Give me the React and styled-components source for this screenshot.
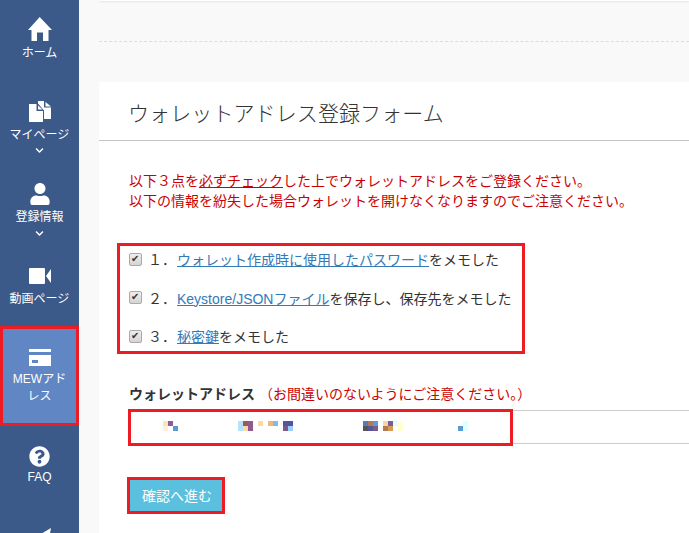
import styled, { createGlobalStyle } from "styled-components";
import { FaUser, FaQuestionCircle, FaChevronDown } from "react-icons/fa";

const GlobalStyle = createGlobalStyle`
  html, body {
    margin: 0;
    height: 533px;
    overflow: hidden;
    background: #f9f9f9;
    font-family: "Liberation Sans", "Noto Sans CJK JP", sans-serif;
    color: #333;
  }
`;

const Page = styled.div`
  display: flex;
  height: 533px;
  overflow: hidden;
`;

const Sidebar = styled.nav`
  flex: 0 0 79px;
  display: flex;
  flex-direction: column;
  background: #3b5a8a;
  color: #fff;
  overflow: hidden;
`;

const NavItem = styled.div`
  flex: 0 0 ${(p) => p.$height}px;
  box-sizing: border-box;
  padding-top: ${(p) => p.$top}px;
  display: flex;
  flex-direction: column;
  align-items: center;
  font-size: 12px;
  line-height: 18px;
  text-align: center;
  position: relative;
  ${(p) => p.$active && "background: #6087c4;"}
`;

const NavIcon = styled.div`
  height: ${(p) => p.$h || 24}px;
  margin-bottom: ${(p) => p.$gap ?? 2}px;
  display: flex;
  align-items: center;
  justify-content: center;
`;

const NavChevron = styled(FaChevronDown)`
  font-size: 9px;
  margin-top: ${(p) => p.$mt ?? 3}px;
`;

const WrappedLabel = styled.div`
  padding: 3px 8px 0;
  line-height: 17px;
`;

const RedFrame = styled.div`
  position: absolute;
  inset: ${(p) => p.$inset || "0"};
  ${(p) => p.$width && `width: ${p.$width}px;`}
  ${(p) => p.$height && `height: ${p.$height}px;`}
  border: 3px solid #ed1c24;
  pointer-events: none;
`;

const Main = styled.main`
  flex: 1;
  min-width: 0;
  padding-left: 20px;
`;

const TopBar = styled.div`
  height: 1px;
  background: #fff;
  box-shadow: 0 1px 2px rgba(0, 0, 0, 0.12);
`;

const DashedRule = styled.div`
  margin-top: 40px;
  border-top: 1px dashed #ddd;
`;

const Card = styled.section`
  margin-top: 40px;
  background: #fff;
  height: 500px;
`;

const CardHeading = styled.h1`
  margin: 0;
  height: 58px;
  padding-left: 29px;
  border-bottom: 1px solid #c4c4c4;
  font-size: 21px;
  font-weight: 300;
  letter-spacing: 0.1px;
  line-height: 63px;
  color: #333;
`;

const CardBody = styled.div`
  padding: 30px 0 0 30px;
`;

const Notice = styled.p`
  margin: 0;
  font-size: 14px;
  line-height: 20px;
  color: #cc0000;
  u { text-decoration: underline; }
`;

const CheckList = styled.div`
  position: relative;
  margin-top: 32px;
  height: 110px;
  box-sizing: border-box;
  padding-top: 6px;
  display: flex;
  flex-direction: column;
  gap: 18.5px;
`;

const CheckRow = styled.label`
  display: flex;
  align-items: center;
  height: 20px;
  font-size: 14px;
`;

const CheckBox = styled.input`
  appearance: none;
  flex: 0 0 13px;
  width: 13px;
  height: 13px;
  margin: 0 6px 0 0;
  box-sizing: border-box;
  border: 1px solid #aaa;
  border-radius: 2px;
  background: linear-gradient(#eee, #d4d4d4);
  position: relative;
  &::before {
    content: "✔";
    position: absolute;
    left: 1px;
    top: -2px;
    font-size: 10px;
    line-height: 14px;
    color: #333;
  }
`;

const ItemLink = styled.a`
  margin-left: 1px;
  color: #337ab7;
  text-decoration: underline;
`;

const FieldLabel = styled.div`
  margin-top: 31px;
  font-size: 14px;
  line-height: 20px;
  font-weight: 700;
  span {
    font-weight: 400;
    color: #cc0000;
  }
`;

const AddressField = styled.div`
  position: relative;
  margin-top: 6px;
  height: 32px;
  border: 1px solid #ccc;
  border-right: 0;
  background: #fff;
`;

const Mosaic = styled.svg`
  position: absolute;
  left: -1px;
  top: 0;
`;

const SubmitWrap = styled.div`
  position: relative;
  display: inline-block;
  margin: 36px 0 0 1px;
`;

const SubmitButton = styled.button`
  display: block;
  width: 92px;
  height: 31px;
  padding: 0 0 2px 2px;
  border: 0;
  background: #5bc0de;
  color: #fff;
  font: inherit;
  font-size: 14px;
`;

// 塗りつぶし（モザイク）のブロック: [x, y, 色]
const blocks = [
  [34, 0, "#fde4b5"], [39, 0, "#8f5a9e"], [34, 5, "#fdf1d8"], [44, 5, "#5a9bd5"],
  [109, 0, "#b5e3fb"], [109, 5, "#b5e3fb"], [114, 0, "#9a5b5b"], [114, 5, "#fdd9a5"],
  [119, 0, "#8f5a8f"], [119, 5, "#8f5a8f"], [129, 0, "#fdd8a0"], [139, 0, "#ecb97a"],
  [144, 0, "#7fbcec"], [154, 0, "#55559a"], [154, 5, "#7a5a8a"], [159, 0, "#5055a0"],
  [159, 5, "#9ad0f8"],
  [234, 0, "#5a7ab5"], [234, 5, "#555555"], [239, 0, "#b07a55"], [239, 5, "#55559a"],
  [244, 0, "#5a9ad5"], [244, 5, "#7a5a8a"], [254, 0, "#fdd49a"], [254, 5, "#b07a55"],
  [259, 0, "#7a5aa0"], [259, 5, "#d59a55"], [264, 0, "#e8fbff"], [269, 0, "#ffffd5"],
  [269, 5, "#ffffd5"],
  [329, 5, "#5a9ad5"], [334, 0, "#e0ffff"], [334, 5, "#e0ffff"],
];

const HomeIcon = () => (
  <svg width="24" height="24" viewBox="0 0 24 24" fill="currentColor">
    <path d="M11.7 0 24 13h-3.5v11H15v-8.5H9V24H3.5V13H0z" />
  </svg>
);

const DuplicateIcon = () => (
  <svg width="24" height="22" viewBox="0 0 24 22" fill="currentColor">
    <path d="M1 3h7.5v7H15v11H1z" />
    <path d="M10 4.500 14.500 8.500H10z" />
    <path d="M10 0h6v6.500h7V18h-7V9.500L10 2.500z" />
    <path d="M17.500 1 23 5.500h-5.500z" />
  </svg>
);

const VideoIcon = () => (
  <svg width="22" height="16" viewBox="0 0 22 16" fill="currentColor">
    <rect width="16" height="16" rx="1" />
    <path d="M22 1v14l-5-7z" />
  </svg>
);

const CardIcon = () => (
  <svg width="22" height="17" viewBox="0 0 22 17" fill="currentColor">
    <path d="M0 0h22v3H0z" />
    <path fillRule="evenodd" d="M0 6h22v11H0zM3 11v3h6v-3z" />
  </svg>
);

const SendIcon = () => (
  <svg width="22" height="22" viewBox="0 0 22 22" fill="currentColor">
    <path d="M22 0 0 13l7 2.500L18 6l-8 10v6l3.500-4.500 5 2z" />
  </svg>
);

const App = () => (
  <Page>
    <GlobalStyle />
    <Sidebar>
      <NavItem $height={83} $top={17}>
        <NavIcon $gap={3}><HomeIcon /></NavIcon>
        ホーム
      </NavItem>
      <NavItem $height={83} $top={17}>
        <NavIcon><DuplicateIcon /></NavIcon>
        マイページ
        <NavChevron $mt={2} />
      </NavItem>
      <NavItem $height={82} $top={16}>
        <NavIcon><FaUser size={22} /></NavIcon>
        登録情報
        <NavChevron />
      </NavItem>
      <NavItem $height={78} $top={16}>
        <NavIcon><VideoIcon /></NavIcon>
        動画ページ
      </NavItem>
      <NavItem $height={100} $top={22} $active>
        <NavIcon $h={18}><CardIcon /></NavIcon>
        <WrappedLabel>MEWアドレス</WrappedLabel>
        <RedFrame />
      </NavItem>
      <NavItem $height={87} $top={18}>
        <NavIcon $gap={0}><FaQuestionCircle size={21} /></NavIcon>
        FAQ
      </NavItem>
      <NavItem $height={20} $top={14}>
        <NavIcon><SendIcon /></NavIcon>
      </NavItem>
    </Sidebar>
    <Main>
      <TopBar />
      <DashedRule />
      <Card>
        <CardHeading>ウォレットアドレス登録フォーム</CardHeading>
        <CardBody>
          <Notice>
            以下３点を<u>必ずチェック</u>した上でウォレットアドレスをご登録ください。
            <br />
            以下の情報を紛失した場合ウォレットを開けなくなりますのでご注意ください。
          </Notice>
          <CheckList>
            <CheckRow>
              <CheckBox type="checkbox" checked readOnly />
              １．<ItemLink>ウォレット作成時に使用したパスワード</ItemLink>をメモした
            </CheckRow>
            <CheckRow>
              <CheckBox type="checkbox" checked readOnly />
              ２．<ItemLink>Keystore/JSONファイル</ItemLink>を保存し、保存先をメモした
            </CheckRow>
            <CheckRow>
              <CheckBox type="checkbox" checked readOnly />
              ３．<ItemLink>秘密鍵</ItemLink>をメモした
            </CheckRow>
            <RedFrame $inset="0 auto auto -12px" $width={402} $height={105} />
          </CheckList>
          <FieldLabel>
            ウォレットアドレス <span>（お間違いのないようにご注意ください。）</span>
          </FieldLabel>
          <AddressField>
            <Mosaic width="360" height="32" viewBox="0 -10 360 32">
              {blocks.map(([x, y, c]) => (
                <rect key={`${x}-${y}`} x={x} y={y} width="5" height="5" fill={c} />
              ))}
            </Mosaic>
            <RedFrame $inset="-2px auto auto -2px" $width={379} $height={31} />
          </AddressField>
          <SubmitWrap>
            <SubmitButton>確認へ進む</SubmitButton>
            <RedFrame $inset="-3px" />
          </SubmitWrap>
        </CardBody>
      </Card>
    </Main>
  </Page>
);

export default App;
